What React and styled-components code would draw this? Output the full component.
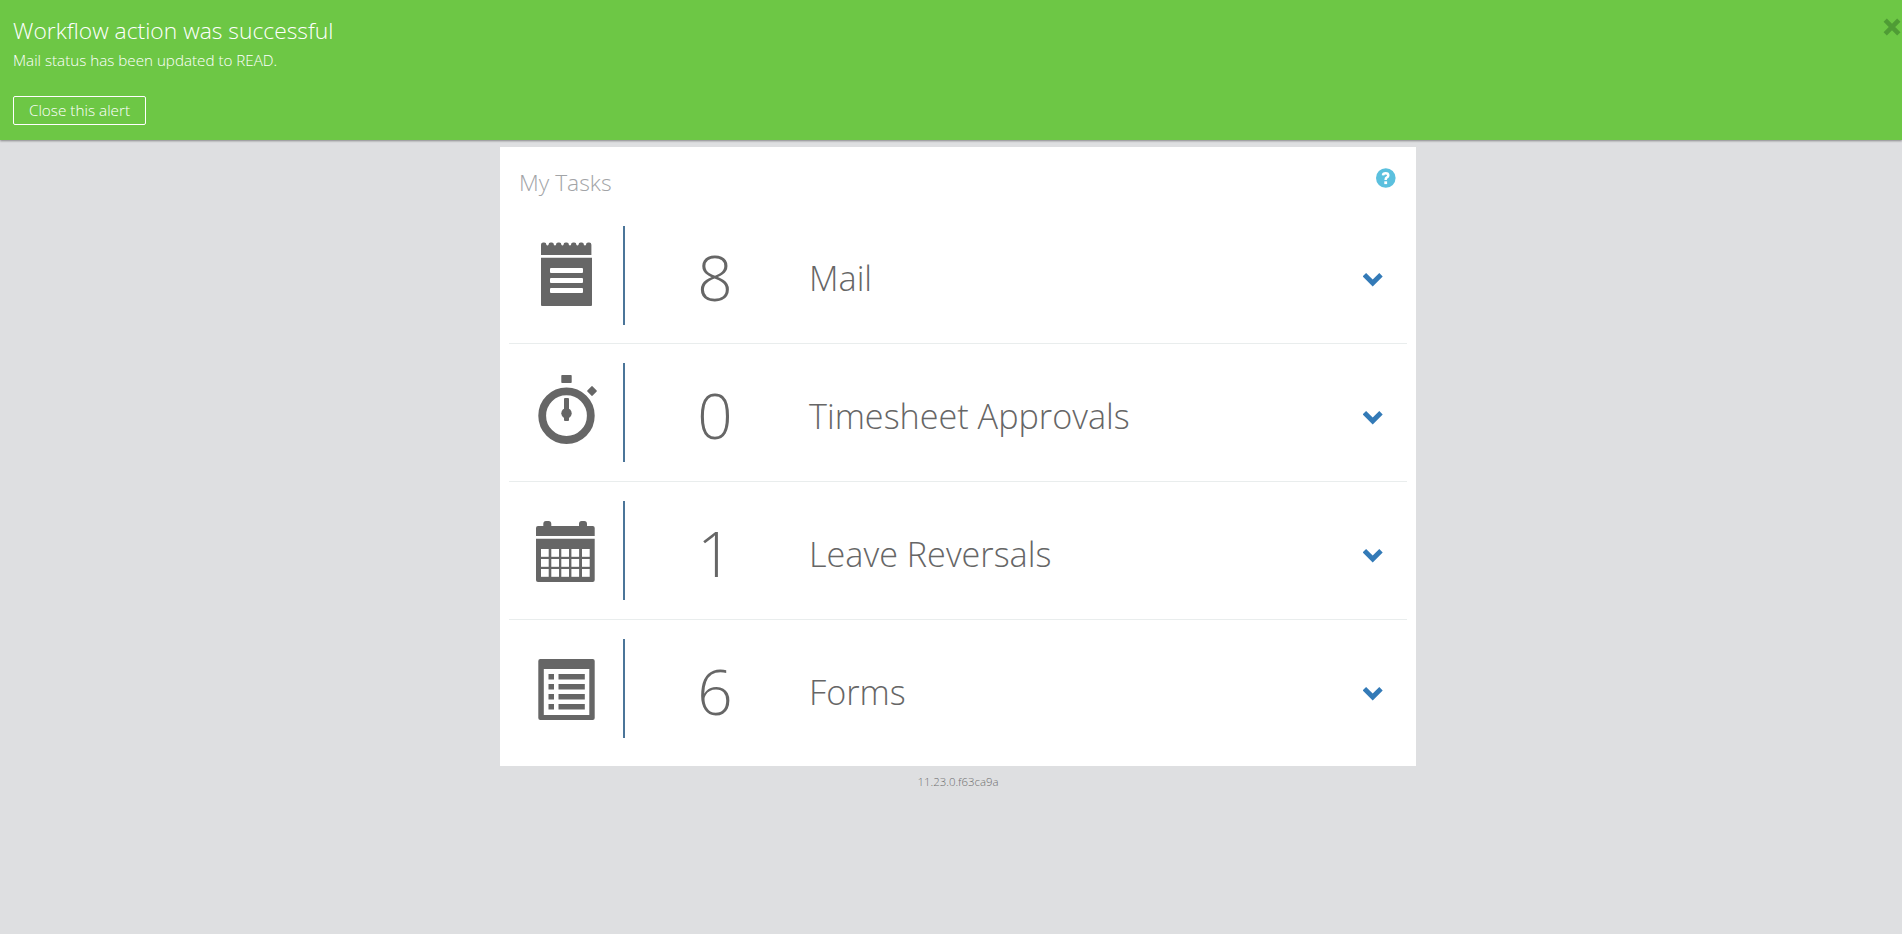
import React from "react";
import styled, { createGlobalStyle } from "styled-components";

const GlobalStyle = createGlobalStyle`
  * { box-sizing: border-box; }
  body {
    margin: 0;
    background: #dedfe1;
    font-family: "Open Sans", "Noto Sans", sans-serif;
    font-weight: 300;
    color: #666;
  }
`;

const Page = styled.div`
  min-height: 934px;
  display: flex;
  flex-direction: column;
`;

const Alert = styled.section`
  height: 140px;
  padding: 13px 0 0 13px;
  display: flex;
  justify-content: space-between;
  align-items: flex-start;
  background: #6dc745;
  box-shadow: 0 1px 2px rgba(0, 0, 0, 0.4);
  color: #fff;
`;

const AlertBody = styled.div`
  display: flex;
  flex-direction: column;
  align-items: flex-start;
`;

const AlertTitle = styled.h1`
  margin: 0;
  font-size: 22.85px;
  line-height: 35px;
  font-weight: 300;
`;

const AlertText = styled.p`
  margin: 2px 0 0;
  font-size: 15.2px;
  line-height: 21px;
`;

const AlertButton = styled.button`
  margin-top: 25px;
  width: 133px;
  height: 29px;
  padding: 0;
  border: 1px solid #fff;
  border-radius: 2px;
  background: transparent;
  color: #fff;
  font: inherit;
  font-size: 15.3px;
  line-height: 27px;
`;

const IconButton = styled.button`
  display: flex;
  padding: 0;
  border: 0;
  background: none;
`;

const DismissButton = styled(IconButton)`
  margin: 4.5px 1.5px 0 0;
`;

const Card = styled.main`
  width: 916px;
  height: 619px;
  margin: 7px 0 0 500px;
  padding: 0 9px;
  background: #fff;
`;

const CardHeader = styled.header`
  height: 60px;
  padding: 18px 11px 0 10px;
  display: flex;
  justify-content: space-between;
  align-items: flex-start;
`;

const CardTitle = styled.h2`
  margin: 0;
  font-size: 22.85px;
  line-height: 36px;
  font-weight: 300;
  color: #a2a4a7;
`;

const HelpButton = styled(IconButton)`
  margin-top: 3.4px;
`;

const Row = styled.div`
  height: ${(p) => (p.$first ? 137 : 138)}px;
  padding: 19px 24px 0 0;
  display: grid;
  grid-template-columns: 114px 2px 180px 1fr 20px;
  border-bottom: 1px solid ${(p) => (p.$last ? "transparent" : "#e9eded")};
`;

const IconCell = styled.div`
  height: 99px;
  padding-left: 17px;
  svg { display: block; }
`;

const Rule = styled.div`
  height: 99px;
  background: #4b7599;
`;

const TextCell = styled.div`
  height: 99px;
  padding-top: ${(p) => (p.$first ? 0 : 1)}px;
`;

const Count = styled(TextCell)`
  text-align: center;
  font-size: 62px;
  line-height: 102px;
`;

const Label = styled(TextCell)`
  padding-left: 4px;
  font-size: 34.2px;
  line-height: 104px;
`;

const Toggle = styled(IconButton)`
  margin-top: ${(p) => (p.$first ? 47 : 48)}px;
  align-self: start;
`;

const Version = styled.footer`
  margin: 8px 0 0 500px;
  width: 916px;
  text-align: center;
  font-size: 11.4px;
  line-height: 15px;
  color: #707070;
`;

const Glyph = ({ children }) => (
  <svg width="80" height="99" viewBox="0 0 80 99" fill="#666">{children}</svg>
);

// Torn paper edge: seven wide rounded teeth with shallow scoops between them
const bump = "a2.2 2.2 0 0 1 2.2 -2.2h1a2.2 2.2 0 0 1 2.2 2.2";
const dip = "a1.1 1 0 0 0 2.1 0";
const tornEdge = `M15 29V18.7${(bump + dip).repeat(6)}${bump}V29Z`;

const MailIcon = () => (
  <Glyph>
    <path d={tornEdge} />
    <path d="M15 31.8H66V79Q66 80 65 80H16Q15 80 15 79Z" />
    <g fill="#fff">
      <rect x="24" y="42" width="33" height="5" rx="1" />
      <rect x="24" y="52" width="33" height="5" rx="1" />
      <rect x="24" y="62" width="33" height="5" rx="1" />
    </g>
  </Glyph>
);

const StopwatchIcon = () => (
  <Glyph>
    <rect x="35.3" y="12" width="10.4" height="8" rx="0.8" />
    <rect x="62.4" y="24.4" width="7.2" height="7.2" rx="0.6" transform="rotate(45 66 28)" />
    <circle cx="40.5" cy="52.7" r="24.3" fill="none" stroke="#666" strokeWidth="7.8" />
    <circle cx="40.5" cy="50.3" r="5.2" />
    <rect x="38" y="35" width="5" height="23" rx="1" />
  </Glyph>
);

const CalendarIcon = () => (
  <Glyph>
    <path d="M10 35V27Q10 25 12 25H17.3V23Q17.3 20 20 20H22.5Q25.3 20 25.3 23V25H53V23Q53 20 55.7 20H58.2Q61 20 61 23V25H66.7Q68.7 25 68.7 27V35Z" />
    <path d="M10 37.8H68.7V79Q68.7 81 66.7 81H12Q10 81 10 79Z" />
    <g fill="#fff">
      {[48, 58, 68].map((y) =>
        [15, 25.3, 35.3, 45.4, 56].map((x) => <rect key={`${x}-${y}`} x={x} y={y} width="7.7" height="7.8" />)
      )}
    </g>
  </Glyph>
);

const FormIcon = () => (
  <Glyph>
    <rect x="12.3" y="20" width="56.4" height="61" rx="2" />
    <rect x="17.8" y="30" width="45.5" height="46" fill="#fff" />
    {[35, 45, 55, 65].map((y) => (
      <g key={y}>
        <rect x="22.5" y={y} width="5.5" height="5.5" />
        <rect x="32.5" y={y} width="26.3" height="5.5" />
      </g>
    ))}
  </Glyph>
);

const CloseIcon = () => (
  <svg width="18" height="18" viewBox="0 0 18 18">
    <path d="M2.2 2.2L15.8 15.8M15.8 2.2L2.2 15.8" stroke="#4f9c35" strokeWidth="4.6" />
  </svg>
);

const HelpIcon = () => (
  <svg width="20" height="20" viewBox="0 0 20 20">
    <circle cx="9.8" cy="10" r="9.8" fill="#5bc0de" />
    <path d="M7 7.4Q7.1 5.3 9.7 5.3Q12.3 5.3 12.3 7.4Q12.3 8.6 10.9 9.4Q9.7 10.1 9.7 11.3V12" fill="none" stroke="#fff" strokeWidth="2.5" />
    <rect x="8.3" y="13.3" width="2.8" height="2.8" fill="#fff" />
  </svg>
);

const ChevronIcon = () => (
  <svg width="20" height="14" viewBox="0 0 20 14">
    <path d="M3.1 0L9.7 6.6L16.3 0L19.7 3.4L9.7 13.4L-0.3 3.4Z" fill="#337ab7" />
  </svg>
);

const tasks = [
  { label: "Mail", count: 8, Icon: MailIcon },
  { label: "Timesheet Approvals", count: 0, Icon: StopwatchIcon },
  { label: "Leave Reversals", count: 1, Icon: CalendarIcon },
  { label: "Forms", count: 6, Icon: FormIcon },
];

export default function App() {
  return (
    <Page>
      <GlobalStyle />
      <Alert>
        <AlertBody>
          <AlertTitle>Workflow action was successful</AlertTitle>
          <AlertText>Mail status has been updated to READ.</AlertText>
          <AlertButton>Close this alert</AlertButton>
        </AlertBody>
        <DismissButton aria-label="Close"><CloseIcon /></DismissButton>
      </Alert>
      <Card>
        <CardHeader>
          <CardTitle>My Tasks</CardTitle>
          <HelpButton aria-label="Help"><HelpIcon /></HelpButton>
        </CardHeader>
        {tasks.map(({ label, count, Icon }, i) => (
          <Row key={label} $first={i === 0} $last={i === tasks.length - 1}>
            <IconCell><Icon /></IconCell>
            <Rule />
            <Count $first={i === 0}>{count}</Count>
            <Label $first={i === 0}>{label}</Label>
            <Toggle $first={i === 0} aria-label={`Expand ${label}`}><ChevronIcon /></Toggle>
          </Row>
        ))}
      </Card>
      <Version>11.23.0.f63ca9a</Version>
    </Page>
  );
}
